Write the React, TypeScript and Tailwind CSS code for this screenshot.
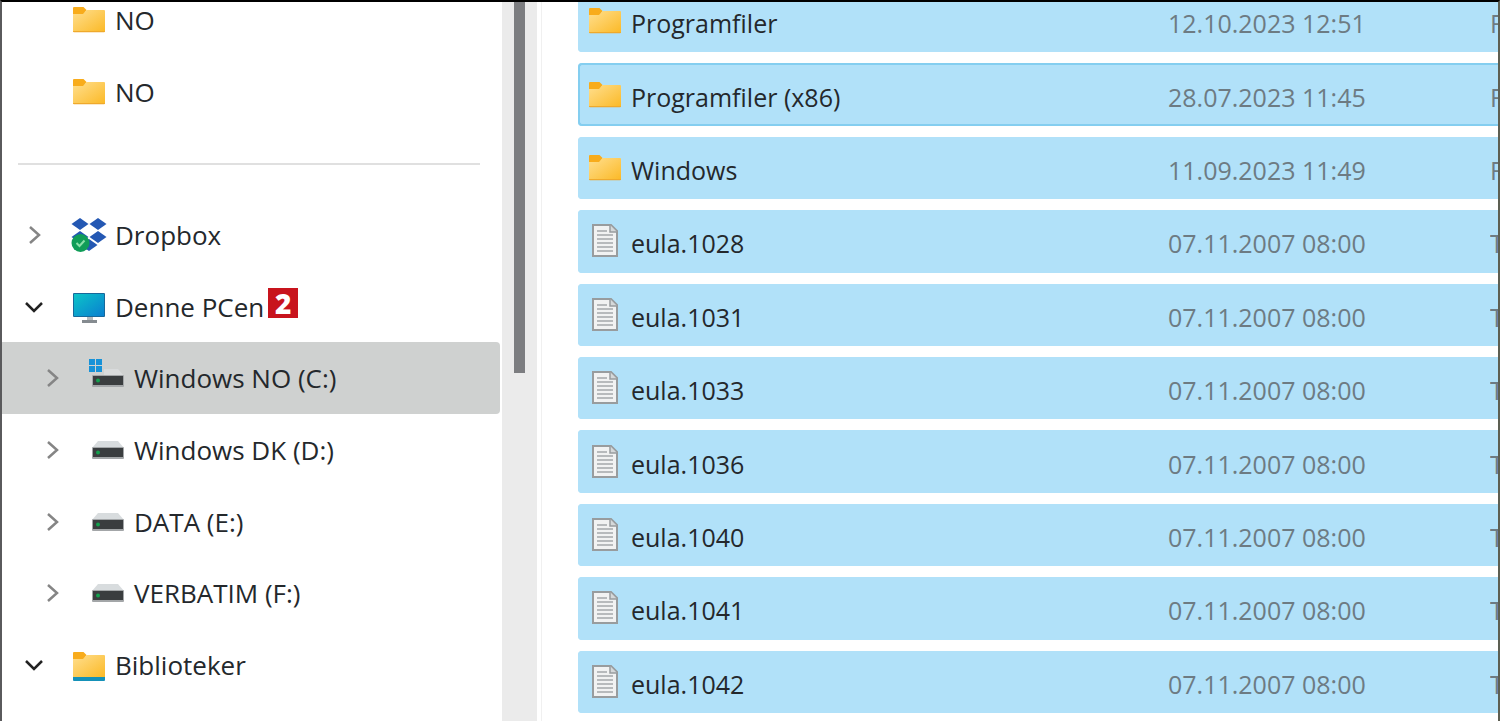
type IconName = 'folder' | 'library' | 'dropbox' | 'pc' | 'systemDrive' | 'drive' | 'text';
type TreeItem = { id: string; label: string; icon: IconName; level: number; state?: 'open' | 'closed'; selected?: boolean; badge?: string };
type FileRow = { name: string; date: string; type: string; icon: IconName; focused?: boolean };

const quickItems: TreeItem[] = [
  { id: 'no-1', label: 'NO', icon: 'folder', level: 0 },
  { id: 'no-2', label: 'NO', icon: 'folder', level: 0 }
];

const treeItems: TreeItem[] = [
  { id: 'dropbox', label: 'Dropbox', icon: 'dropbox', level: 0, state: 'closed' },
  { id: 'pc', label: 'Denne PCen', icon: 'pc', level: 0, state: 'open', badge: '2' },
  { id: 'c', label: 'Windows NO (C:)', icon: 'systemDrive', level: 1, state: 'closed', selected: true },
  { id: 'd', label: 'Windows DK (D:)', icon: 'drive', level: 1, state: 'closed' },
  { id: 'e', label: 'DATA (E:)', icon: 'drive', level: 1, state: 'closed' },
  { id: 'f', label: 'VERBATIM (F:)', icon: 'drive', level: 1, state: 'closed' },
  { id: 'lib', label: 'Biblioteker', icon: 'library', level: 0, state: 'open' }
];

const files: FileRow[] = [
  { name: 'Programfiler', date: '12.10.2023 12:51', type: 'Filmappe', icon: 'folder' },
  { name: 'Programfiler (x86)', date: '28.07.2023 11:45', type: 'Filmappe', icon: 'folder', focused: true },
  { name: 'Windows', date: '11.09.2023 11:49', type: 'Filmappe', icon: 'folder' },
  ...['1028', '1031', '1033', '1036', '1040', '1041', '1042'].map((n) => ({
    name: `eula.${n}`,
    date: '07.11.2007 08:00',
    type: 'Tekstdokument',
    icon: 'text' as IconName
  }))
];

function Icon({ name }: { name: IconName }) {
  return (
    <svg viewBox="0 0 36 36" className="size-9 shrink-0 overflow-visible" aria-hidden="true">
      <defs>
        <linearGradient id="folderFill" x1="0" y1="0" x2="1" y2="1">
          <stop offset="0" stopColor="#ffdf8f" />
          <stop offset="1" stopColor="#fbb926" />
        </linearGradient>
        <linearGradient id="screenFill" x1="0" y1="0" x2="1" y2="1">
          <stop offset="0" stopColor="#0cc4c8" />
          <stop offset="1" stopColor="#0a7fd0" />
        </linearGradient>
      </defs>
      {name === 'folder' && (
        <>
          <path d="M2 6a1 1 0 0 1 1-1h9.500l3 3-3 5H2z" fill="#f8ac1c" />
          <path d="M2 12h10l3.500-4H33a1 1 0 0 1 1 1v20a1 1 0 0 1-1 1H3a1 1 0 0 1-1-1z" fill="url(#folderFill)" />
          <path d="M2 29h32v.3a1 1 0 0 1-1 1H3a1 1 0 0 1-1-1z" fill="#efa92c" />
        </>
      )}
      {name === 'library' && (
        <>
          <path d="M2 6a1 1 0 0 1 1-1h9.500l3 3-3 5H2z" fill="#f8ac1c" />
          <path d="M2 12h10l3.500-4H33a1 1 0 0 1 1 1v21H2z" fill="url(#folderFill)" />
          <path d="M2 30h32v3a1 1 0 0 1-1 1H3a1 1 0 0 1-1-1z" fill="#1591b8" />
        </>
      )}
      {name === 'dropbox' && (
        <>
          <g fill="#2458b3">
            <path d="M9 1l8.500 6L9 13 .500 7z" />
            <path d="M27 1l8.500 6-8.500 6-8.500-6z" />
            <path d="M9 14l8.500 6L9 26 .500 20z" />
            <path d="M27 14l8.500 6-8.500 6-8.500-6z" />
            <path d="M18 22l8.500 6-8.500 6-8.500-6z" />
          </g>
          <circle cx="9.500" cy="26" r="9" fill="#109d58" />
          <path d="M5.500 26l3 3 5-5.500" fill="none" stroke="#8be0a8" strokeWidth="2" />
        </>
      )}
      {name === 'pc' && (
        <>
          <path d="M11 31h15v3H11z" fill="#858b90" />
          <path d="M16 28h6v3h-6z" fill="#b4babd" />
          <rect x="2" y="4" width="32" height="24" rx="1" fill="#17699b" />
          <rect x="3" y="5" width="30" height="22" fill="url(#screenFill)" />
        </>
      )}
      {(name === 'drive' || name === 'systemDrive') && (
        <>
          {name === 'drive' ? (
            <path d="M8 9h20l6 7H2z" fill="#d8dcde" />
          ) : (
            <>
              <path d="M14 9h14l6 7H14z" fill="#d9dbdc" />
              <path d="M-1-1h6v6h-6zM6-1h6v6H6zM-1 6h6v6h-6zM6 6h6v6H6z" fill="#1792d8" />
            </>
          )}
          <rect x="2" y="15" width="32" height="12" rx="1" fill="#a3a6a8" />
          <rect x="3" y="16" width="30" height="9" fill="#3a3d3f" />
          <circle cx="8" cy="20.500" r="2" fill="#13a04d" />
        </>
      )}
      {name === 'text' && (
        <>
          <path d="M6 2h18l6 6v25H6z" fill="#f1f2f2" stroke="#989c9e" strokeWidth="2" />
          <path d="M23 2v7h7" fill="#d5d8d9" stroke="#989c9e" strokeWidth="1.500" />
          <path d="M10 8h10M10 12h16M10 16h16M10 20h16M10 24h16M10 28h16" stroke="#a4a8aa" strokeWidth="1.500" />
        </>
      )}
    </svg>
  );
}

function Chevron({ state }: { state?: 'open' | 'closed' }) {
  if (!state) return <span className="w-5 shrink-0" />;
  return (
    <svg viewBox="0 0 20 20" className="size-5 shrink-0" fill="none" strokeWidth="2.500" aria-hidden="true">
      {state === 'open' ? <path d="M2 6l8 8 8-8" stroke="#222" /> : <path d="M6 2l9 8-9 8" stroke="#858585" />}
    </svg>
  );
}

function TreeRow({ item }: { item: TreeItem }) {
  return (
    <li className="flex">
      <button
        className={`flex w-full items-center rounded-r-sm text-left ${item.level ? 'pl-10' : 'pl-[22px]'} ${item.selected ? 'bg-[#cfd1d0]' : ''}`}
      >
        <Chevron state={item.state} />
        <span className={`flex items-center gap-2 ${item.level ? 'pl-7' : 'pl-[27px]'}`}>
          <Icon name={item.icon} />
          <span className="flex items-center gap-1">
            {item.label}
            {item.badge && (
              <span className="mb-2 flex size-[30px] items-center justify-center bg-[#c8141d] text-[28px] font-extrabold text-white">
                {item.badge}
              </span>
            )}
          </span>
        </span>
      </button>
    </li>
  );
}

export default function App() {
  return (
    <div className="flex h-screen overflow-hidden border-t-2 border-r-2 border-l-2 border-t-black border-r-[#5d5f52] border-l-[#5a5a5c] bg-white font-['Open_Sans','Noto_Sans',sans-serif] text-[25px] leading-8 text-[#24282c]">
      <nav className="w-1/3 max-w-[498px] shrink-0 text-[26px]">
        <ul className="-mt-[18px] grid h-[144px] auto-rows-fr">
          {quickItems.map((item) => (
            <TreeRow key={item.id} item={item} />
          ))}
        </ul>
        <div className="flex h-[71px] items-center pr-5 pl-4">
          <hr className="w-full border-t-2 border-[#e0e0e0]" />
        </div>
        <ul className="grid h-[502px] auto-rows-fr">
          {treeItems.map((item) => (
            <TreeRow key={item.id} item={item} />
          ))}
        </ul>
      </nav>

      <div className="ml-[2px] flex w-[35px] shrink-0 justify-center bg-[#ebebeb]">
        <div className="h-[371px] w-[11px] bg-[#7c7d80]" />
      </div>
      <div className="ml-1 w-px shrink-0 bg-[#f0f0f0]" />

      <main className="min-w-0 flex-1 overflow-hidden pl-9">
        <table className="-mt-[23px] h-[745px] w-full table-fixed border-separate border-spacing-x-0 border-spacing-y-[11px]">
          <tbody>
            {files.map((file) => {
              const edge = file.focused ? 'border-[#84cef0]' : 'border-[#b1e1f9]';
              return (
                <tr key={file.name} className="bg-[#b1e1f9]">
                  <td className={`rounded-l-sm border-y-2 border-l-2 py-0 pl-[7px] ${edge}`}>
                    <span className="flex items-center gap-2">
                      <Icon name={file.icon} />
                      <span className="pt-1">{file.name}</span>
                    </span>
                  </td>
                  <td className={`w-[322px] border-y-2 px-0 pt-1 pb-0 text-[#6d7b83] ${edge}`}>{file.date}</td>
                  <td className={`w-[8px] overflow-hidden border-y-2 px-0 pt-1 pb-0 whitespace-nowrap text-[#6d7b83] ${edge}`}>{file.type}</td>
                </tr>
              );
            })}
          </tbody>
        </table>
      </main>
    </div>
  );
}
